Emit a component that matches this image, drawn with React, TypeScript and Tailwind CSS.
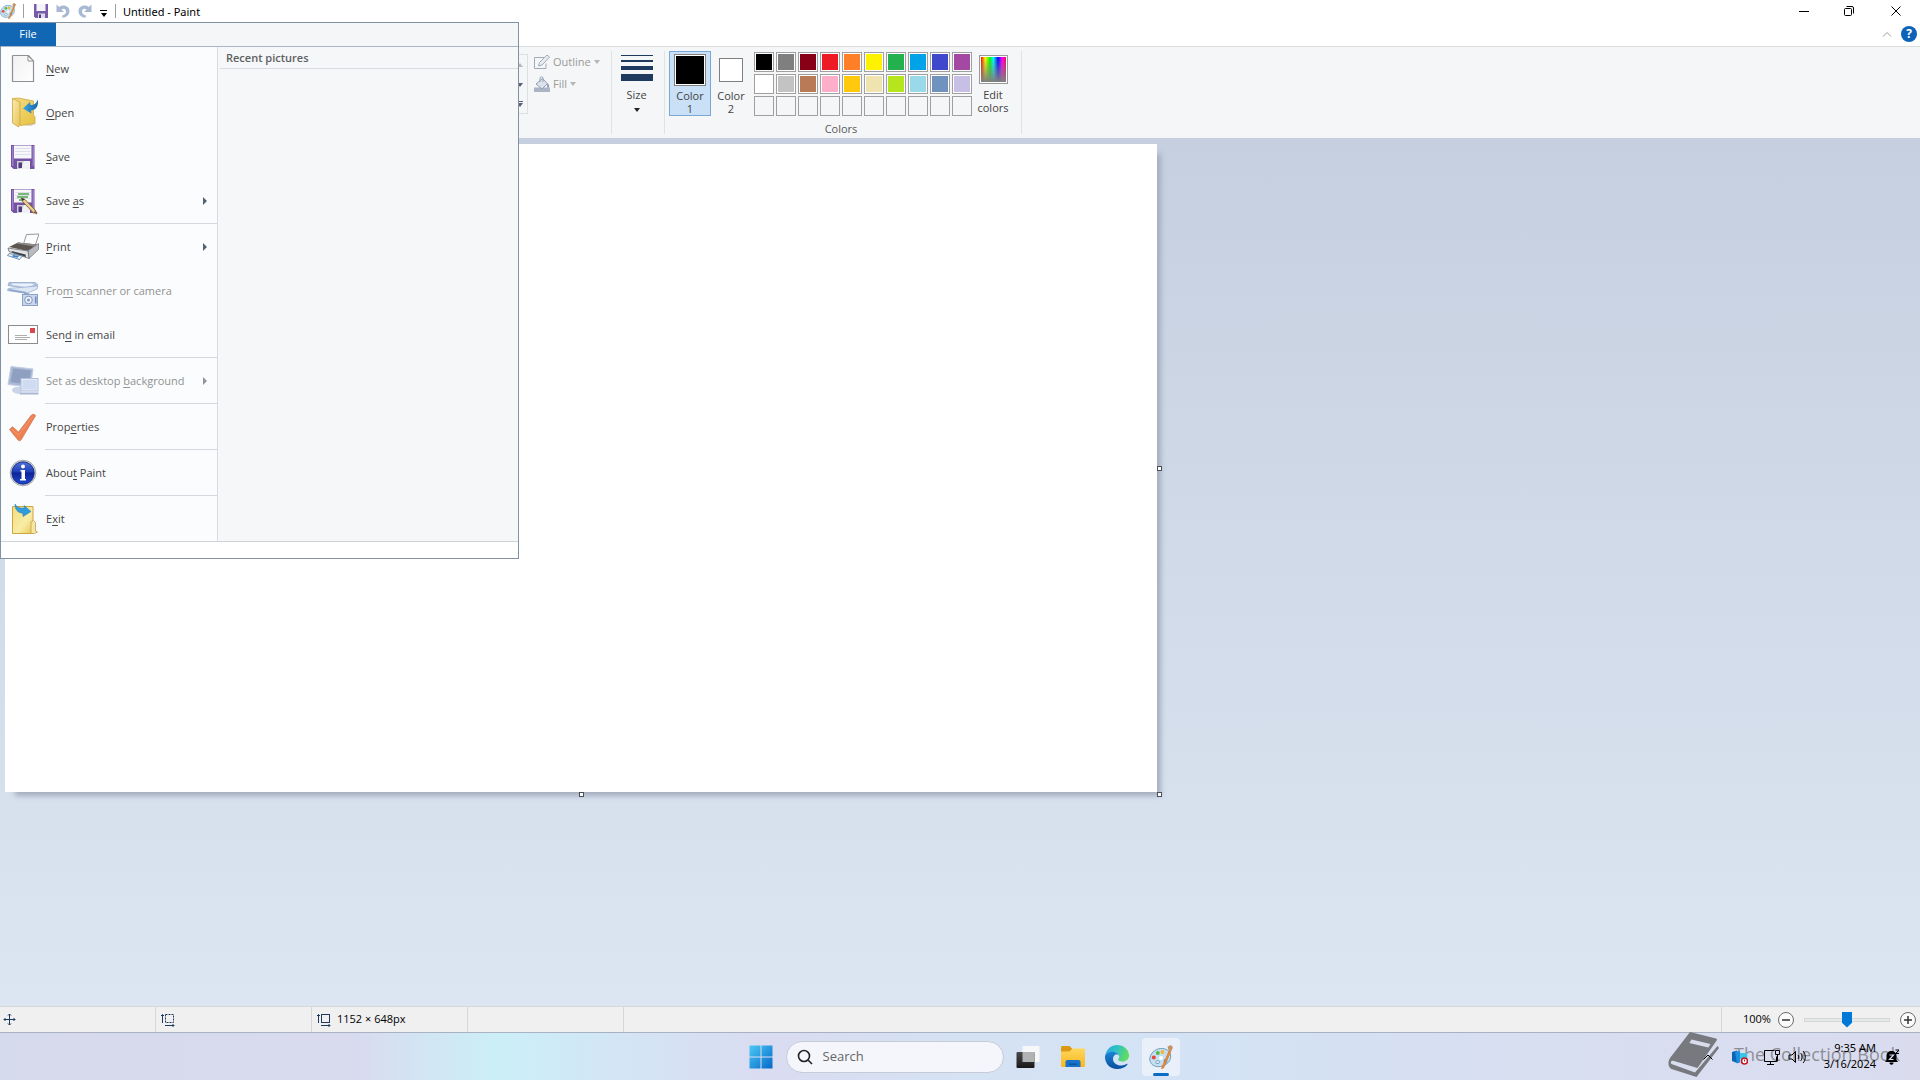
import type { ReactNode } from "react";

/* ---------- menu icons ---------- */

function NewIcon() {
  return (
    <svg viewBox="0 0 32 32" className="size-8 shrink-0">
      <defs>
        <linearGradient id="new-page" x1="0" y1="0" x2="1" y2="1">
          <stop offset="0" stopColor="#f1f1f1" />
          <stop offset="1" stopColor="#fff" />
        </linearGradient>
      </defs>
      <path d="M6 2.5h15.5l5 5.500v20.500H5.500V3z" fill="url(#new-page)" stroke="#8f8f95" strokeWidth="1.200" />
      <path d="M21 3v5h5.500z" fill="#fff" stroke="#8f8f95" />
    </svg>
  );
}

function OpenIcon() {
  return (
    <svg viewBox="0 0 32 32" className="size-8 shrink-0">
      <defs>
        <linearGradient id="open-front" x1="0" y1="0" x2="1" y2="1">
          <stop offset="0" stopColor="#f9ebb4" />
          <stop offset="1" stopColor="#e6c455" />
        </linearGradient>
        <linearGradient id="open-back" x1="0" y1="0" x2="1" y2="1">
          <stop offset="0" stopColor="#f3dc85" />
          <stop offset="1" stopColor="#e6c23f" />
        </linearGradient>
        <linearGradient id="open-arrow" x1="0" y1="0" x2="1" y2="0">
          <stop offset="0" stopColor="#3ba5e6" />
          <stop offset="1" stopColor="#1b66a8" />
        </linearGradient>
      </defs>
      <path d="M12 28l12 1 5-2-3-3z" fill="#c9b9ab" opacity="0.600" />
      <path d="M5.500 1.500l6-.5 15 3v14l1.500 2v6l-4 1-11 1.500z" fill="url(#open-back)" stroke="#cfa845" strokeWidth="0.800" />
      <path d="M5.500 1.500l7.500 3.500v21L11.500 30 5.500 26z" fill="url(#open-front)" stroke="#cfa63d" strokeWidth="0.800" />
      <path d="M16 11.500l7-6.500.5 3c4 .2 6-2 7.500-5.500.5 7-2 10.500-7 11l.5 3z" fill="url(#open-arrow)" />
    </svg>
  );
}

function FloppyShape() {
  return (
    <>
      <path d="M4 4h23.500v24H6.500L4 25.500z" fill="#7452a4" />
      <path d="M5 5h1.500v20H5zM25.500 5H27v20h-1.500z" fill="#9c7fc8" />
      <path d="M7 4.500h17.500v13H7z" fill="#f7f7fb" />
      <path d="M8 7.500h15.500M8 10.500h15.500M8 13.500h15.500" stroke="#dcdee8" strokeWidth="1" />
      <path d="M10 20h13v8H10z" fill="#cfcfd9" />
      <path d="M17 20h6v8h-9z" fill="#f0f0f5" />
      <path d="M11.500 21.500H15V27h-3.500z" fill="#51397b" />
    </>
  );
}

function SaveIcon() {
  return (
    <svg viewBox="0 0 32 32" className="size-8 shrink-0">
      <FloppyShape />
    </svg>
  );
}

function SaveAsIcon() {
  return (
    <svg viewBox="0 0 32 32" className="size-8 shrink-0">
      <FloppyShape />
      <path d="M11 9h11M10 12h11M12 15h6" stroke="#4fa24a" strokeWidth="1.300" />
      <path d="M14.500 13l3.500 1.500L29 26l-2 2.500L15.500 16.500z" fill="#e9cf8b" stroke="#6c5427" strokeWidth="0.800" />
      <path d="M14.500 13l3 1.300-1.700 1.700z" fill="#2f2b26" />
      <path d="M28 25l2.500 3-1 1.500-2.500-2z" fill="#8d5a4d" />
    </svg>
  );
}

function PrintIcon() {
  return (
    <svg viewBox="0 0 32 32" className="size-8 shrink-0">
      <path d="M19.500 3.500L32 3l-4 12-11.500-2z" fill="#fdfdfd" stroke="#8b8b8b" strokeWidth="0.900" />
      <path d="M2 16l9-4.500 19.500 2L21 20z" fill="#5a5550" />
      <path d="M11 11.500l19.500 2-3 2-18.500-3z" fill="#8d8a88" />
      <path d="M21 20l10.500-7.500v6L22 27.500z" fill="#b9bbc0" stroke="#7d7f85" strokeWidth="0.800" />
      <path d="M1 17l20 3 1 7.500L2 20.500z" fill="#dfe1e5" stroke="#6a6c72" strokeWidth="0.800" />
      <path d="M4.500 20l14 3.500.5 2.500L5 21.500z" fill="#3d4046" />
      <path d="M2 22.500l13.500 2.500-3 3.500-12-4z" fill="#e8f2fb" stroke="#567799" strokeWidth="0.800" />
      <path d="M6 24l6 1-1.500 1.800L5 25.500z" fill="#3c86cc" />
    </svg>
  );
}

function ScannerIcon() {
  return (
    <svg viewBox="0 0 32 32" className="size-8 shrink-0">
      <path d="M2 7.500h26l3 2.500-11 3.500L1 10.500z" fill="#b4c4e0" stroke="#93a8cd" strokeWidth="0.800" />
      <path d="M5 8.500h20l2 1.500-8 2L5 10z" fill="#eaf1fb" />
      <path d="M1 13.500L31 11l-1 3-10.500 4.500L.5 15.500z" fill="#dce6f5" stroke="#9fb2d3" strokeWidth="0.800" />
      <path d="M.5 15.500l19 3v-1.500l-17-3z" fill="#8ea4ca" />
      <rect x="15.500" y="19.500" width="15" height="11" fill="#c9d6ec" stroke="#8ba1c8" />
      <path d="M17 18h5v1.500h-5z" fill="#8ea4ca" />
      <circle cx="21.500" cy="25" r="3.800" fill="#eef3fb" stroke="#7f96c0" />
      <circle cx="21.500" cy="25" r="1.500" fill="#7f96c0" />
      <path d="M28 21.500h1.500v7H28z" fill="#7088b7" />
    </svg>
  );
}

function EmailIcon() {
  return (
    <svg viewBox="0 0 32 32" className="size-8 shrink-0">
      <rect x="1.500" y="6.500" width="29" height="18" fill="#fefefe" stroke="#8c8c90" />
      <rect x="23" y="9" width="5" height="5" fill="#d8484c" />
      <path d="M8 16.500h12M8 18.500h15M8 20.500h12" stroke="#a5a5a5" strokeWidth="0.900" />
    </svg>
  );
}

function DesktopIcon() {
  return (
    <svg viewBox="0 0 32 32" className="size-8 shrink-0">
      <path d="M4 1.500L26 4l-2.500 18L1 19.500z" fill="#a9b8d4" stroke="#c1cde2" />
      <path d="M6 3.500L24 5.500l-2 14L3.500 17z" fill="#8f9fc0" />
      <path d="M5 25c0-2.500 4-3.500 9-3.500v7.500c-5 0-9-1.500-9-4z" fill="#c9d5e9" />
      <rect x="14" y="13.500" width="17" height="12.500" fill="#e4ecf8" stroke="#b1bfdb" />
      <path d="M15.500 15h14v9.500h-14z" fill="#cfdbf0" />
      <path d="M13 27.500h18.500v2H13z" fill="#a9b8d6" />
    </svg>
  );
}

function CheckIcon() {
  return (
    <svg viewBox="0 0 32 32" className="size-8 shrink-0">
      <path
        d="M2.500 18.500l3-2.800 6 5.300L24.500 4c1-1.200 3.500-.8 4 .8L14 29c-.8 1-2 1-2.800.2z"
        fill="#ee8052"
        stroke="#cf7a58"
        strokeWidth="0.800"
        strokeLinejoin="round"
      />
      <path d="M4.500 18l7 6L26 5.500" fill="none" stroke="#f39670" strokeWidth="1" />
    </svg>
  );
}

function InfoIcon() {
  return (
    <svg viewBox="0 0 32 32" className="size-8 shrink-0">
      <defs>
        <linearGradient id="info-ball" x1="0" y1="0" x2="0" y2="1">
          <stop offset="0" stopColor="#5271d6" />
          <stop offset="0.450" stopColor="#1c3fb8" />
          <stop offset="0.500" stopColor="#0d249a" />
          <stop offset="1" stopColor="#1e49cf" />
        </linearGradient>
      </defs>
      <circle cx="16" cy="16" r="12.800" fill="#c9ccd3" stroke="#8f939b" strokeWidth="0.700" />
      <circle cx="16" cy="16" r="11.200" fill="url(#info-ball)" stroke="#14257c" strokeWidth="0.800" />
      <circle cx="16" cy="9.500" r="2" fill="#fff" />
      <path d="M13.500 13h4.500v9h1v1.500h-6V22h1.500v-7.500h-1z" fill="#fff" />
    </svg>
  );
}

function ExitIcon() {
  return (
    <svg viewBox="0 0 32 32" className="size-8 shrink-0">
      <defs>
        <linearGradient id="exit-page" x1="0" y1="0" x2="1" y2="1">
          <stop offset="0" stopColor="#f3dc7d" />
          <stop offset="0.600" stopColor="#f8eda6" />
          <stop offset="1" stopColor="#e7c654" />
        </linearGradient>
      </defs>
      <path d="M5.500 3.500h20.500v27H5.500z" fill="url(#exit-page)" stroke="#cda640" />
      <path d="M24 30.500V19l2.500-1.500 2 2V28l2 1-3 1.500z" fill="#f5e6a5" stroke="#c4a050" strokeWidth="0.800" />
      <path d="M8 1c2 3.500 5 4.500 9.500 4L17 2.500l7 6-8 5-.2-3.300C10.500 10 8 6.500 8 1z" fill="#2f9bdc" stroke="#1f78b5" strokeWidth="0.500" />
    </svg>
  );
}

/* ---------- other drawings ---------- */

function PaletteIcon({ className }: { className: string }) {
  return (
    <svg viewBox="0 0 24 24" className={className}>
      <path
        d="M11.500 3.500C5.500 4 1 9 .8 14c-.2 5 4.700 8.500 10.700 7.500 7-1.200 11-6.500 10-11.500-.8-4-4.500-7-10-6.500zM9 18.500c-1.800.6-2.800-.8-2-2s3-1 3.500 0 .2 1.600-1.500 2z"
        fill="#c5dff0"
        stroke="#6d9dbd"
        strokeWidth="1"
      />
      <circle cx="4.800" cy="12.500" r="2" fill="#e2483d" />
      <circle cx="8.800" cy="8" r="2" fill="#59b947" />
      <circle cx="13.500" cy="7" r="1.900" fill="#f2b72e" />
      <circle cx="12" cy="13" r="2" fill="#fff" />
      <circle cx="16.500" cy="16" r="1.900" fill="#3b8ed0" />
      <path d="M20 6l1.600 1L14.500 23l-2 .5z" fill="#ee8b35" stroke="#d67b2d" strokeWidth="0.800" />
      <path d="M18.500 1.500L22 0l2 2.500-2.300 4.800-2-1z" fill="#c39468" />
    </svg>
  );
}

function SmallFloppy() {
  return (
    <svg viewBox="0 0 14 14" className="size-3.5">
      <path d="M0 0h14v14H1.500L0 12.500z" fill="#7a5bab" />
      <path d="M2.500 0h9v7h-9z" fill="#f4f4fa" />
      <path d="M4 9.500h7V14H4z" fill="#dcdce6" />
      <path d="M5 10.500h2V14H5z" fill="#51397b" />
    </svg>
  );
}

function UndoIcon({ flip }: { flip?: boolean }) {
  return (
    <svg viewBox="0 0 14 14" className={flip ? "size-3.5 -scale-x-100" : "size-3.5"}>
      <path
        d="M.5.500v7.500h7.500L5.500 5.500C7.500 4 10 4.800 10 7.500c0 2-1.500 3.500-4 4l.5 2.300C10.500 13.500 13.500 11 13.500 7.300 13.500 2 7.500-.2 3.200 3z"
        fill="#a9b9d3"
      />
    </svg>
  );
}

function Arrow({ className = "" }: { className?: string }) {
  return (
    <svg viewBox="0 0 6 4" width={6} height={4} className={className}>
      <path d="M0 0h6L3 4z" fill="currentColor" />
    </svg>
  );
}

function StartIcon() {
  return (
    <svg viewBox="0 0 24 24" className="size-6">
      <defs>
        <linearGradient id="start" x1="0" y1="0" x2="1" y2="1">
          <stop offset="0" stopColor="#4cc9f5" />
          <stop offset="1" stopColor="#0568c8" />
        </linearGradient>
      </defs>
      <path d="M.5.500h11v11H.5zM12.500.500h11v11h-11zM.5 12.500h11v11H.5zM12.500 12.500h11v11h-11z" fill="url(#start)" />
    </svg>
  );
}

function TaskViewIcon() {
  return (
    <svg viewBox="0 0 24 24" className="size-6">
      <defs>
        <linearGradient id="tv" x1="0" y1="0" x2="0" y2="1">
          <stop offset="0" stopColor="#4a4a4a" />
          <stop offset="1" stopColor="#181818" />
        </linearGradient>
      </defs>
      <rect x="6.500" y="1" width="17" height="16" rx="1" fill="#f7f7f7" />
      <rect x="0.500" y="7" width="18" height="16" rx="1" fill="url(#tv)" />
      <path d="M6.500 7h12v10h-12z" fill="#b1b2b3" />
    </svg>
  );
}

function ExplorerIcon() {
  return (
    <svg viewBox="0 0 24 24" className="size-6">
      <defs>
        <linearGradient id="folder" x1="0" y1="0" x2="0" y2="1">
          <stop offset="0" stopColor="#ffd65c" />
          <stop offset="1" stopColor="#f8b81e" />
        </linearGradient>
      </defs>
      <path d="M0 2.500c0-.8.500-1.500 1.500-1.500h7l3 3V8H0z" fill="#d99a12" />
      <path d="M0 6.500h8.500L11.500 3.500h11c1 0 1.500.7 1.500 1.500v15.500c0 1-.7 1.500-1.500 1.500h-21C.5 22 0 21.500 0 20.500z" fill="url(#folder)" />
      <path d="M4.500 22v-5c0-1.200.8-2 2-2h11c1.200 0 2 .8 2 2v5z" fill="#1673c9" />
      <path d="M8 18.500h8v1.500H8z" fill="#0c57a0" />
    </svg>
  );
}

function EdgeIcon() {
  return (
    <svg viewBox="0 0 24 24" className="size-6">
      <defs>
        <linearGradient id="edge-top" x1="0" y1="0" x2="1" y2="0.300">
          <stop offset="0" stopColor="#2aa9dc" />
          <stop offset="0.500" stopColor="#2fc1c7" />
          <stop offset="1" stopColor="#5fdc62" />
        </linearGradient>
        <linearGradient id="edge-low" x1="0" y1="0" x2="0" y2="1">
          <stop offset="0" stopColor="#1a84d8" />
          <stop offset="1" stopColor="#0b4f9e" />
        </linearGradient>
      </defs>
      <path d="M.3 10.500C1.500 4 6.500 0 12 0c7 0 12 5 12 10.500 0 3.800-3 6-6.300 6-2.800 0-4.500-1-4.500-2 0-.8 1-1.200 1-3C14.200 8.800 11.500 7 8.500 7 4.500 7 1.500 8.500.3 10.500z" fill="url(#edge-top)" />
      <path d="M0 12C0 9 3.500 6.500 8 6.800c3.800.2 6.200 2.500 6.200 4.700 0-1-1-2.200-2.700-2.200-2 0-3.500 2.200-3.500 4.700 0 4 4 6.500 8 6.500 3 0 5-1 6-1.700.6-.2.800.2.500.7C20.500 22.300 16.500 24 12 24 5 24 0 18.500 0 12z" fill="url(#edge-low)" />
    </svg>
  );
}

function BookIcon() {
  return (
    <svg viewBox="0 0 52 46" className="h-[46px] w-[52px]">
      <path d="M22 0l26 6.500c1 .3 1.300 1 .8 1.800L29.500 36 6 29c-3-.8-4 1.500-2.500 3L27 40.500 49.500 14l1.500 2-22.500 29L3.500 37C-.5 35 0 29 2 26z" fill="#77797e" />
      <path d="M23.500 7.500l19 4.500-2.200 3.500-19-4.500z" fill="#dadcee" />
    </svg>
  );
}

/* ---------- file menu ---------- */

type MenuEntry = {
  icon: ReactNode;
  label: [string, string, string]; // before, access key, after
  submenu?: boolean;
  disabled?: boolean;
  divider?: boolean;
};

const MENU: MenuEntry[] = [
  { icon: <NewIcon />, label: ["", "N", "ew"] },
  { icon: <OpenIcon />, label: ["", "O", "pen"] },
  { icon: <SaveIcon />, label: ["", "S", "ave"] },
  { icon: <SaveAsIcon />, label: ["Save ", "a", "s"], submenu: true, divider: true },
  { icon: <PrintIcon />, label: ["", "P", "rint"], submenu: true },
  { icon: <ScannerIcon />, label: ["Fro", "m", " scanner or camera"], disabled: true },
  { icon: <EmailIcon />, label: ["Sen", "d", " in email"], divider: true },
  { icon: <DesktopIcon />, label: ["Set as desktop ", "b", "ackground"], submenu: true, disabled: true, divider: true },
  { icon: <CheckIcon />, label: ["Prop", "e", "rties"], divider: true },
  { icon: <InfoIcon />, label: ["Abou", "t", " Paint"], divider: true },
  { icon: <ExitIcon />, label: ["E", "x", "it"] },
];

function MenuItem({ icon, label, submenu, disabled, divider }: MenuEntry) {
  const [before, key, after] = label;
  return (
    <li>
      <button
        disabled={disabled}
        className="flex h-11 w-full items-center gap-[7px] pr-2.5 pl-1.5 text-left text-[#444] disabled:text-[#929292]"
      >
        {icon}
        <span className="flex-1 whitespace-nowrap">
          {before}
          <span className="underline underline-offset-2">{key}</span>
          {after}
        </span>
        {submenu && (
          <svg viewBox="0 0 4 8" className={disabled ? "h-2 w-1 text-[#8f949b]" : "h-2 w-1 text-[#566273]"}>
            <path d="M0 0l4 4-4 4z" fill="currentColor" />
          </svg>
        )}
      </button>
      {divider && <div className="ml-11 h-0.5 border-t border-[#d3d8de]" />}
    </li>
  );
}

function FileMenu() {
  return (
    <div className="absolute top-[22px] left-0 z-10 w-[519px] border border-[#8391a3] bg-[#fbfcfd] text-[11px]">
      <div className="flex h-6 border-b border-[#a9b6c8] bg-[#f4f6f7]">
        <button className="-ml-px w-14 bg-[#1167b4] text-white">File</button>
      </div>
      <div className="flex">
        <ul className="w-[217px] border-r border-[#d6dae1]">
          {MENU.map((m) => (
            <MenuItem key={m.label.join("")} {...m} />
          ))}
        </ul>
        <div className="flex-1 bg-[#f5f7f9] pl-0.5">
          <h2 className="h-[22px] border-b border-[#d8dce2] pl-1.5 leading-[22px] font-semibold text-[#5f6062]">
            Recent pictures
          </h2>
        </div>
      </div>
      <div className="h-[17px] border-t border-[#cfd4dc] bg-white" />
    </div>
  );
}

/* ---------- title bar and ribbon ---------- */

function TitleBar() {
  return (
    <header className="flex h-[22px] shrink-0 items-center bg-white text-[11px] text-black">
      <PaletteIcon className="size-4" />
      <span className="ml-[7px] h-3.5 w-px bg-[#a0a0a0]" />
      <div className="ml-2.5 flex items-center gap-2">
        <button aria-label="Save"><SmallFloppy /></button>
        <button aria-label="Undo"><UndoIcon /></button>
        <button aria-label="Redo"><UndoIcon flip /></button>
        <button aria-label="Customize Quick Access Toolbar" className="flex flex-col items-center gap-0.5 pt-1">
          <span className="h-px w-[7px] bg-black" />
          <Arrow className="text-black" />
        </button>
      </div>
      <span className="mr-[7px] ml-2 h-3.5 w-px bg-[#a0a0a0]" />
      <h1 className="flex-1 pt-0.5 font-['Noto_Sans','Open_Sans',sans-serif]">Untitled - Paint</h1>
      <div className="flex">
        <button aria-label="Minimize" className="flex w-[45px] justify-center">
          <svg viewBox="0 0 12 12" className="size-3"><path d="M1 6.500h10" stroke="#000" /></svg>
        </button>
        <button aria-label="Restore" className="flex w-[45px] justify-center">
          <svg viewBox="0 0 12 12" className="size-3" fill="none" stroke="#000">
            <rect x="1.500" y="3.500" width="7" height="7" rx="1" />
            <path d="M3.500 1.500h5.500a1.500 1.500 0 0 1 1.500 1.500v5.500" />
          </svg>
        </button>
        <button aria-label="Close" className="flex w-[49px] justify-center">
          <svg viewBox="0 0 12 12" className="size-3"><path d="M1.500 1.500l9 9M10.500 1.500l-9 9" stroke="#000" /></svg>
        </button>
      </div>
    </header>
  );
}

function TabRow() {
  return (
    <div className="flex h-[25px] shrink-0 items-center justify-end gap-[9px] border-b border-[#dadbdc] bg-white pr-[3px]">
      <button aria-label="Collapse ribbon">
        <svg viewBox="0 0 10 6" className="h-1.5 w-2.5"><path d="M1 5.500l4-4 4 4" fill="none" stroke="#9c9c9c" /></svg>
      </button>
      <button aria-label="Help" className="size-4 rounded-full bg-[#0d63b8] text-[12px] leading-4 font-bold text-white">?</button>
    </div>
  );
}

const PALETTE = [
  ["#000000", "Black"], ["#7f7f7f", "Gray-50%"], ["#880015", "Dark red"], ["#ed1c24", "Red"], ["#ff7f27", "Orange"],
  ["#fff200", "Yellow"], ["#22b14c", "Green"], ["#00a2e8", "Turquoise"], ["#3f48cc", "Indigo"], ["#a349a4", "Purple"],
  ["#ffffff", "White"], ["#c3c3c3", "Gray-25%"], ["#b97a57", "Brown"], ["#ffaec9", "Rose"], ["#ffc90e", "Gold"],
  ["#efe4b0", "Light yellow"], ["#b5e61d", "Lime"], ["#99d9ea", "Light turquoise"], ["#7092be", "Blue-gray"], ["#c8bfe7", "Lavender"],
];

function Ribbon() {
  return (
    <div className="flex h-[91px] shrink-0 bg-[#f5f6f7] py-1 text-[11px] text-[#444]">
      {/* shapes gallery, mostly under the menu */}
      <div className="w-[528px] pt-[3px]">
        <div className="ml-auto flex w-4 flex-col border border-[#dcdfe3] text-[#566273]">
          <button aria-label="Scroll up" className="flex h-5 items-center justify-center text-[#b6bac0]">
            <svg viewBox="0 0 6 4" className="h-1 w-1.5"><path d="M0 4h6L3 0z" fill="currentColor" /></svg>
          </button>
          <button aria-label="Scroll down" className="flex h-5 items-center justify-center"><Arrow /></button>
          <button aria-label="More shapes" className="flex h-[18px] flex-col items-center justify-center gap-px">
            <span className="h-px w-1.5 bg-current" />
            <Arrow />
          </button>
        </div>
      </div>
      <div className="flex w-[84px] flex-col border-r border-[#e0e2e4] pl-1.5 text-[#9a9a9a]">
        <button className="flex h-[22px] items-center gap-[3px]">
          <svg viewBox="0 0 16 16" className="size-4" fill="none" stroke="#a0abba">
            <path d="M11 3.500H.5v11H12v-5" />
            <path d="M4.500 12l1-3.500L13 1l2.500 2L8 11z" fill="#e9edf3" />
          </svg>
          Outline
          <Arrow className="text-[#b5b5b5]" />
        </button>
        <button className="flex h-[22px] items-center gap-[3px]">
          <svg viewBox="0 0 16 16" className="size-4">
            <path d="M0 11.500h16V16H0z" fill="#a9b4c4" />
            <path d="M2 8l6.500-5.500 5 5L8 13z" fill="#dbe2ec" stroke="#94a1b5" />
            <path d="M6 6V2c0-1.500 3-1.500 3 0v4" fill="none" stroke="#94a1b5" />
            <path d="M13 7c2 1 2.500 3 2 4.500h-2z" fill="#94a1b5" />
          </svg>
          Fill
          <Arrow className="text-[#b5b5b5]" />
        </button>
      </div>
      <div className="w-[53px] border-r border-[#e0e2e4] pr-[3px]">
        <button className="flex w-full flex-col items-center pt-1">
          <span className="flex w-8 flex-col gap-1">
            <span className="h-px bg-[#1f3a5f]" />
            <span className="h-0.5 bg-[#1f3a5f]" />
            <span className="h-1 bg-[#1f3a5f]" />
            <span className="h-[7px] bg-[#1f3a5f]" />
          </span>
          <span className="my-[7px] leading-[13px]">Size</span>
          <Arrow className="text-[#222]" />
        </button>
      </div>
      <div className="flex flex-col border-r border-[#e0e2e4] pl-1">
        <div className="flex h-[66px]">
          <button className="flex w-[42px] flex-col items-center border border-[#7ba7d7] bg-[#c9e0f7] pt-0.5 leading-[13px]">
            <span className="mb-[3px] size-8 shrink-0 border border-[#808080] bg-black shadow-[inset_0_0_0_1px_#fff]" />
            Color
            <br />1
          </button>
          <button className="flex w-10 flex-col items-center pt-[7px] leading-[13px]">
            <span className="mb-[7px] size-6 shrink-0 border border-[#808080] bg-white" />
            Color
            <br />2
          </button>
          <div className="ml-[3px] grid grid-cols-10 gap-0.5 self-center">
            {PALETTE.map(([color, name]) => (
              <button
                key={name}
                aria-label={name}
                className="size-5 border border-[#a0a0a0] shadow-[inset_0_0_0_1px_#fff]"
                style={{ backgroundColor: color }}
              />
            ))}
            {Array.from({ length: 10 }, (_, i) => (
              <button key={i} aria-label={`Custom color ${i + 1}`} className="size-5 border border-[#a0a0a0] bg-[#f5f6f7]" />
            ))}
          </div>
          <button className="mr-[7px] flex w-[42px] flex-col items-center pt-1 leading-[13px]">
            <span className="mb-1 size-[29px] shrink-0 border border-[#999] bg-white p-px">
              <span className="block size-full bg-[linear-gradient(to_top,#808080,transparent),linear-gradient(to_right,#f00,#ff0_17%,#0f0_36%,#0ff_50%,#00f_68%,#f0f_85%,#f04)]" />
            </span>
            Edit colors
          </button>
        </div>
        <div className="pt-[5px] pr-2 text-center leading-4 text-[#5a5a5a]">Colors</div>
      </div>
    </div>
  );
}

/* ---------- status bar ---------- */

function SizeIcon({ dashed }: { dashed?: boolean }) {
  return (
    <svg viewBox="0 0 14 14" className="size-3.5" fill="none" stroke="#1f3a5f">
      <path d="M1.500 10V1.500M0 3l1.500-1.500L3 3" />
      <rect x="4.500" y="1.500" width="8" height="8" strokeDasharray={dashed ? "2 1" : undefined} />
      <path d="M4 12.500h9M11.500 11l1.500 1.500-1.500 1.500" />
    </svg>
  );
}

function StatusBar() {
  return (
    <footer className="flex h-[27px] shrink-0 items-stretch border-y border-t-[#d5d8da] border-b-[#a9b2c2] bg-[#f0f0f0] text-[11px] text-black">
      <div className="flex w-[156px] items-center border-r border-[#d7d7d7] pl-[3px]">
        <svg viewBox="0 0 13 13" className="size-[13px]" fill="none" stroke="#1f3a5f">
          <path d="M6.500 1v11M1 6.500h11M5 2.500L6.500 1 8 2.500M5 10.500L6.500 12 8 10.500M2.500 5L1 6.500 2.500 8M10.500 5L12 6.500 10.500 8" />
        </svg>
      </div>
      <div className="flex w-[156px] items-center border-r border-[#d7d7d7] pl-[5px]">
        <SizeIcon dashed />
      </div>
      <div className="flex w-[156px] items-center gap-1.5 border-r border-[#d7d7d7] pl-[5px]">
        <SizeIcon />
        1152 × 648px
      </div>
      <div className="w-[156px] border-r border-[#d7d7d7]" />
      <div className="flex-1 border-r border-[#d7d7d7]" />
      <div className="flex items-center pr-1 pl-[21px]">
        <label htmlFor="zoom" className="w-[35px]">100%</label>
        <button aria-label="Zoom out">
          <svg viewBox="0 0 16 16" className="size-4" fill="#fafafa" stroke="#6c6c6c">
            <circle cx="8" cy="8" r="7.500" />
            <path d="M4 8h8" stroke="#333" strokeWidth="1.500" />
          </svg>
        </button>
        <input
          id="zoom"
          type="range"
          defaultValue={50}
          className="mx-2.5 h-4 w-[86px] appearance-none bg-transparent [&::-webkit-slider-runnable-track]:h-1 [&::-webkit-slider-runnable-track]:border [&::-webkit-slider-runnable-track]:border-[#d6d6d6] [&::-webkit-slider-runnable-track]:bg-[#e7eaea] [&::-webkit-slider-thumb]:-mt-[7px] [&::-webkit-slider-thumb]:h-4 [&::-webkit-slider-thumb]:w-2.5 [&::-webkit-slider-thumb]:appearance-none [&::-webkit-slider-thumb]:bg-[#0078d7] [&::-webkit-slider-thumb]:[clip-path:polygon(0_0,100%_0,100%_70%,50%_100%,0_70%)]"
        />
        <button aria-label="Zoom in">
          <svg viewBox="0 0 16 16" className="size-4" fill="#fafafa" stroke="#6c6c6c">
            <circle cx="8" cy="8" r="7.500" />
            <path d="M4 8h8M8 4v8" stroke="#333" strokeWidth="1.500" />
          </svg>
        </button>
      </div>
    </footer>
  );
}

/* ---------- taskbar ---------- */

function Tray() {
  return (
    <div className="relative flex items-center justify-end">
      <div className="absolute right-5 flex items-center gap-3.5 pb-1 text-[18px] whitespace-nowrap text-[#77797e]/80">
        <BookIcon />
        The Collection Book
      </div>
      <div className="relative flex items-center pr-5 text-black">
        <button aria-label="Show hidden icons" className="mr-[19px]">
          <svg viewBox="0 0 10 6" className="h-1.5 w-2.5"><path d="M.5 5.500l4.500-4.500 4.500 4.500" fill="none" stroke="#000" /></svg>
        </button>
        <svg viewBox="0 0 16 16" className="mr-4 size-4">
          <path d="M0 3l5-1.500v12.500L0 12z" fill="#0a66b5" />
          <path d="M3 2.500L8 2v11.500l-3 1z" fill="#1c8fdd" />
          <path d="M8 4h7v6H8z" fill="#39c4ea" />
          <circle cx="12.500" cy="12" r="3" fill="#fff" stroke="#c4141f" strokeWidth="1.600" />
          <path d="M12.500 10.500v2" stroke="#c4141f" />
        </svg>
        <svg viewBox="0 0 16 16" className="mr-2 size-4" fill="none" stroke="#000">
          <path d="M10.500 1.500H.5v11h12v-5M6.500 12.500v3M3 15.500h7" />
          <path d="M11.500 1.500h4v4h-4zM13.500 5.500v6c0 1 0 1-1 1" />
        </svg>
        <svg viewBox="0 0 18 16" className="mr-3.5 h-4 w-[18px]" fill="none" stroke="#000">
          <path d="M1 6h3l3.500-3.500v11L4 10H1zM10 6c1 1 1 3 0 4M12.500 4c2 2 2 6 0 8M15 2c3 3 3 9 0 12" />
        </svg>
        <div className="w-14 pb-0.5 text-right font-['Noto_Sans','Open_Sans',sans-serif] text-[11px] leading-4 whitespace-nowrap">
          9:35 AM
          <br />
          3/16/2024
        </div>
        <svg viewBox="0 0 16 16" className="ml-2 size-4">
          <path d="M1 13l1.500-2V7C2.500 4 4.500 2 7.500 2s5 2 5 5v4l1.500 2zM5.500 13.500h4c0 1.500-.8 2.200-2 2.200s-2-.7-2-2.200z" fill="#000" />
          <path d="M5.500 6h4l-4 4.500h4" fill="none" stroke="#dadcee" strokeWidth="1.200" />
          <path d="M11.500 1H15l-3.500 3.500H15" fill="none" stroke="#000" />
        </svg>
      </div>
    </div>
  );
}

function Taskbar() {
  return (
    <nav className="grid h-[47px] shrink-0 grid-cols-[1fr_auto_1fr] bg-[linear-gradient(to_right,#d5daec_0%,#d9daee_18%,#cbeff7_26%,#d4e4f5_33%,#dadcf1_40%,#d5e2f4_50%,#d3e3f5_62%,#d7dff1_78%,#dadcee_100%)]">
      <div />
      <div className="flex items-center pl-2">
        <button aria-label="Start" className="mr-[13px]"><StartIcon /></button>
        <label className="mr-3 flex h-8 w-[218px] items-center gap-2.5 rounded-full border border-[#c6cbd9] bg-[#f4f6fb] pl-2.5">
          <svg viewBox="0 0 16 16" className="size-4 shrink-0" fill="none" stroke="#222" strokeWidth="1.600">
            <circle cx="7" cy="7" r="5.500" />
            <path d="M11 11l4 4" />
          </svg>
          <input aria-label="Search" placeholder="Search" className="w-36 bg-transparent text-[13px] outline-none placeholder:text-[#666]" />
        </label>
        <button aria-label="Task view" className="mr-[21px]"><TaskViewIcon /></button>
        <button aria-label="File Explorer" className="mr-5"><ExplorerIcon /></button>
        <button aria-label="Microsoft Edge" className="mr-[13px]"><EdgeIcon /></button>
        <button aria-label="Paint" className="relative flex h-[38px] w-[38px] items-center justify-center rounded bg-[#eaf0f9]">
          <PaletteIcon className="size-6" />
          <span className="absolute bottom-0 h-[3px] w-4 rounded-full bg-[#0a6cc4]" />
        </button>
      </div>
      <Tray />
    </nav>
  );
}

function Handle({ className }: { className: string }) {
  return <span className={`absolute size-[5px] border border-[#4a5058] bg-white ${className}`} />;
}

export default function App() {
  return (
    <div className="relative flex h-screen flex-col overflow-hidden font-['Open_Sans','Noto_Sans',sans-serif]">
      <TitleBar />
      <TabRow />
      <Ribbon />
      <FileMenu />
      <main className="flex-1 bg-linear-to-b from-[#c5cfdf] to-[#dce6f2] pt-1.5 pl-[5px]">
        <div className="relative h-[648px] w-[1152px] bg-white shadow-[7px_7px_5px_-3px_#a5afbf]">
          <Handle className="top-[322px] left-full" />
          <Handle className="top-full left-[574px]" />
          <Handle className="top-full left-full" />
        </div>
      </main>
      <StatusBar />
      <Taskbar />
    </div>
  );
}
